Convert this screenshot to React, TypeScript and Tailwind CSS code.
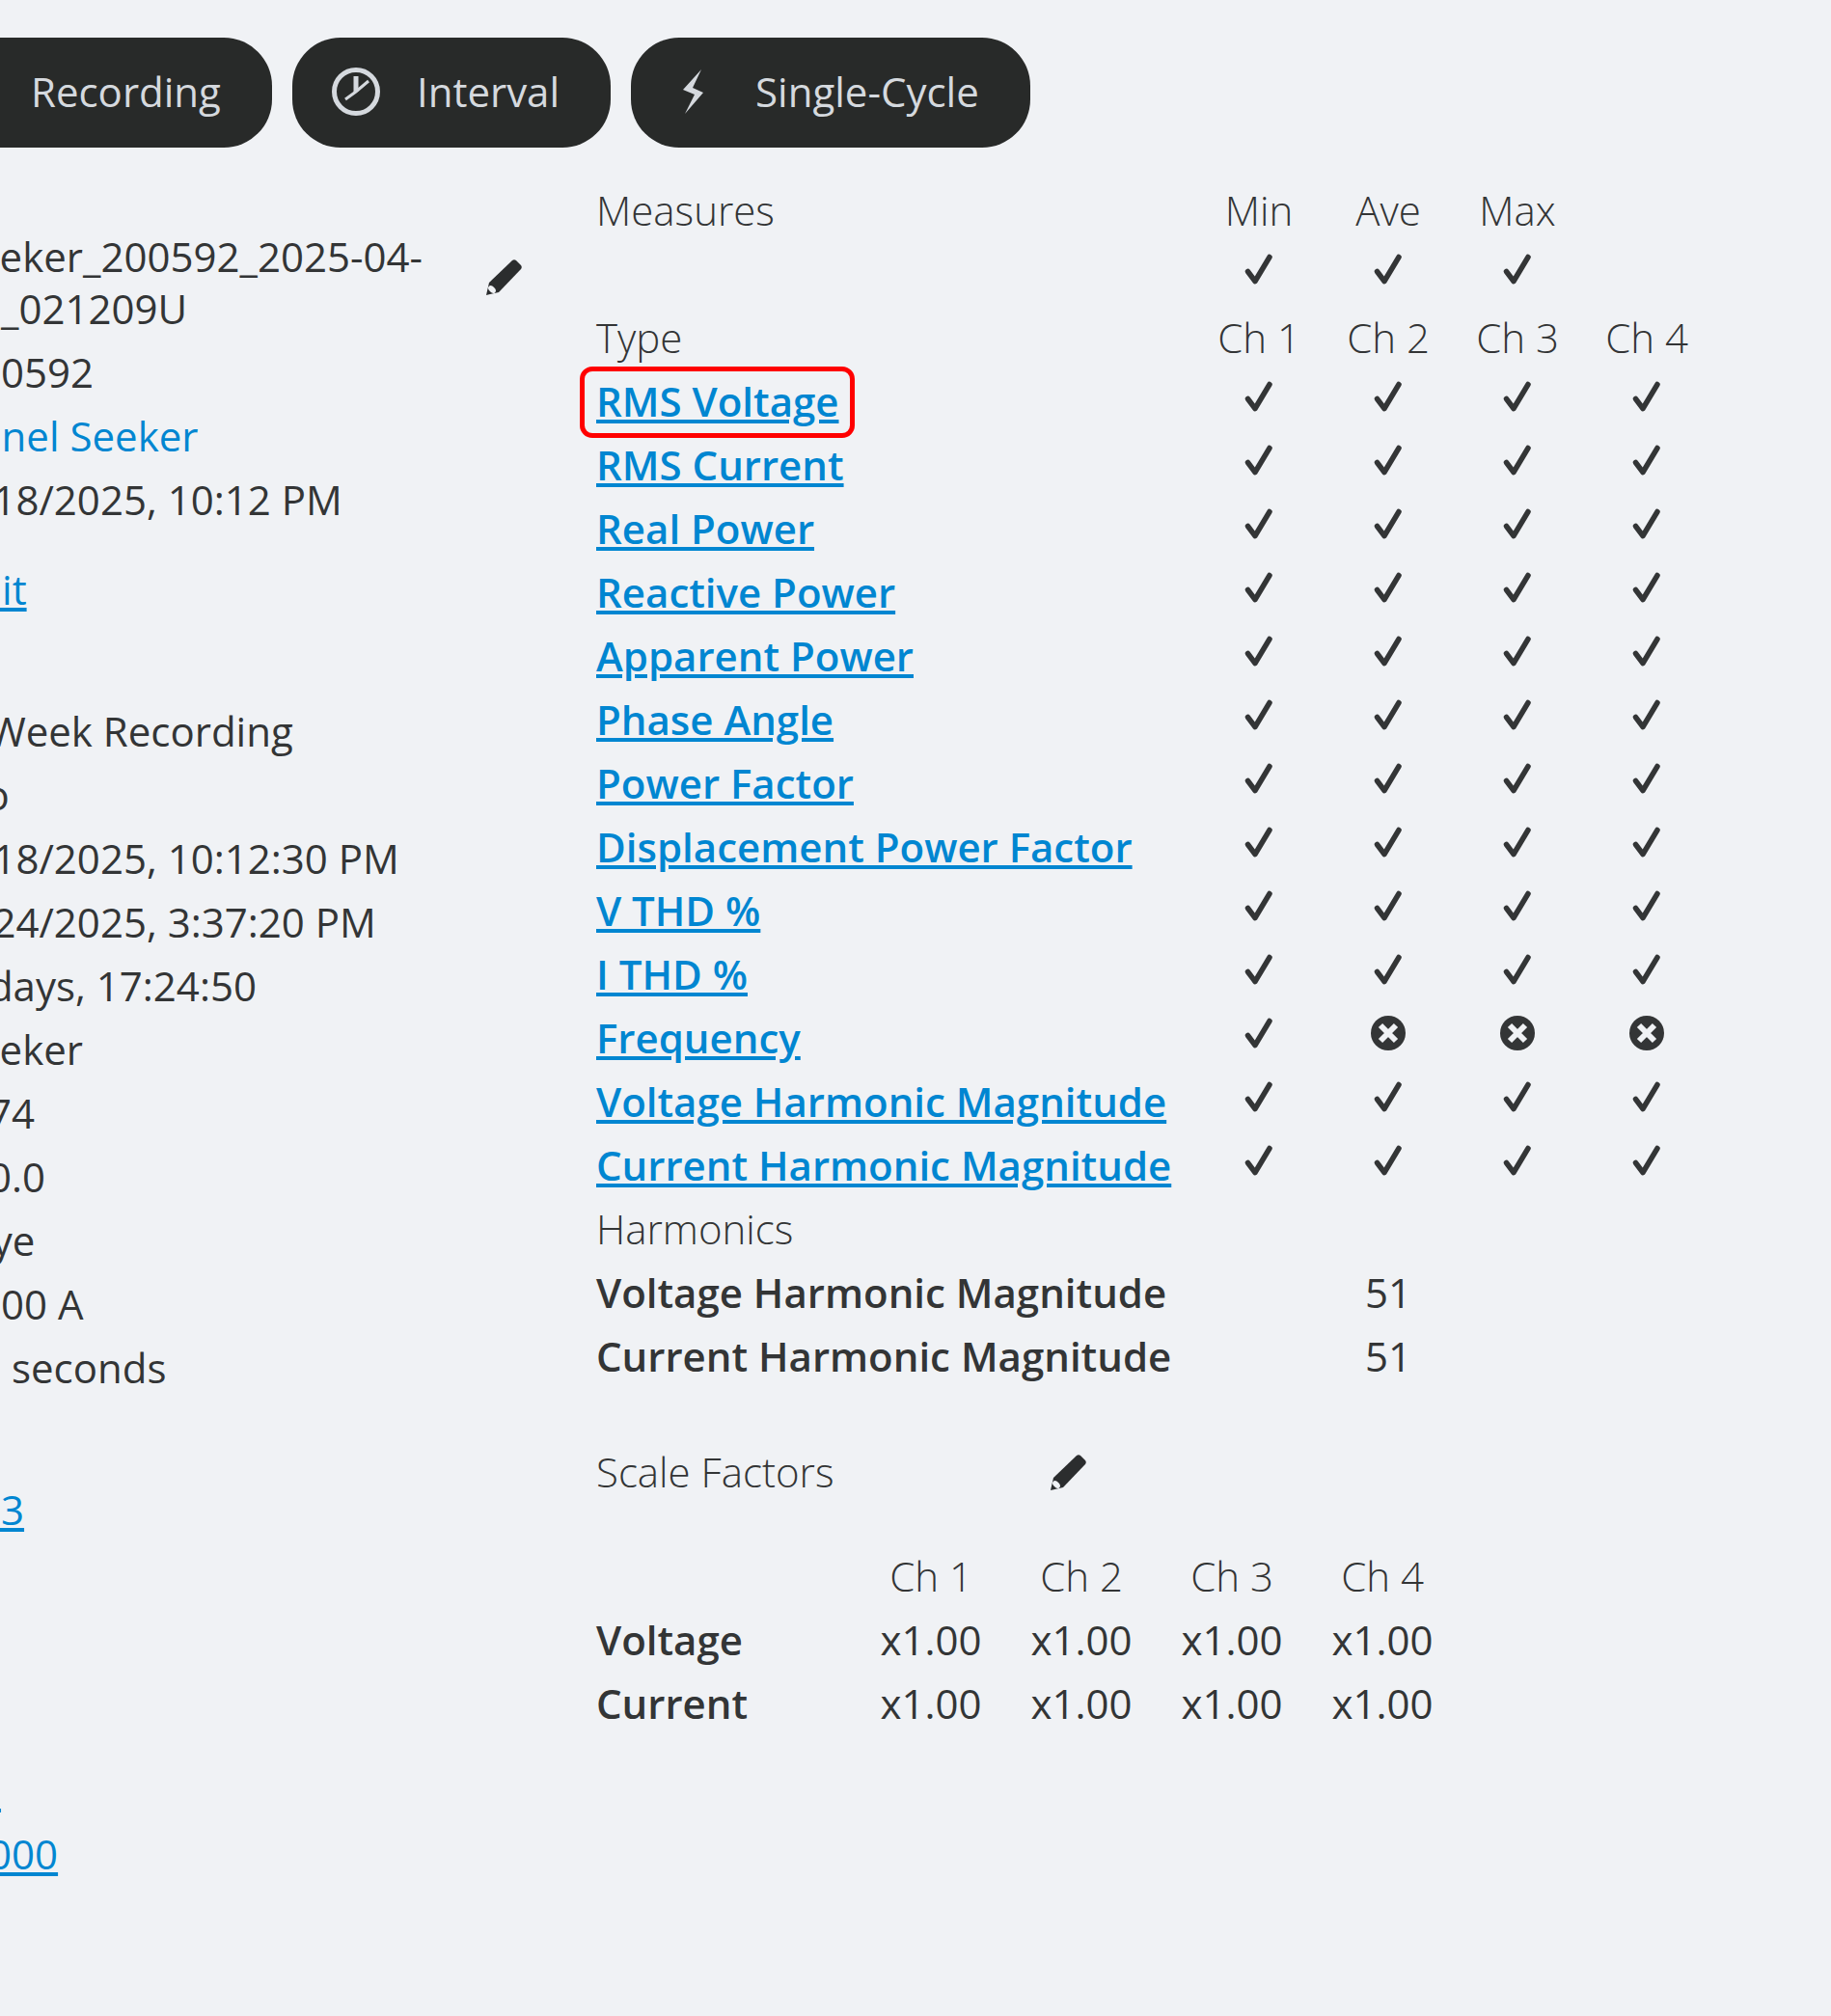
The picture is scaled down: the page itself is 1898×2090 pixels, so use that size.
const font = "font-['Open_Sans',sans-serif]";

function Check() {
  return (
    <svg width="30" height="32" viewBox="0 0 30 32" fill="none" stroke="#333536" strokeWidth="5.5" strokeLinecap="round" strokeLinejoin="round">
      <path d="M3.5 18.5 L11 28.5 L26 3.5" />
    </svg>
  );
}

function Cross() {
  return (
    <svg width="36" height="36" viewBox="0 0 36 36">
      <circle cx="18" cy="18" r="18" fill="#333536" />
      <path d="M10 10 L26 26 M26 10 L10 26" stroke="#f0f2f5" strokeWidth="6" />
    </svg>
  );
}

function Pencil() {
  return (
    <svg width="37" height="37" viewBox="0 0 37 37">
      <path d="M0 37 L3 24 L27 1 Q29 -0.5 31 1 L36 6 Q37.5 8 36 10 L13 34 Z" fill="#2b2d2e" />
      <ellipse cx="6" cy="31" rx="4.5" ry="3" transform="rotate(45 6 31)" fill="#f0f2f5" />
    </svg>
  );
}

function Clock() {
  return (
    <svg width="50" height="50" viewBox="0 0 50 50" fill="none" stroke="#d5d9de">
      <circle cx="25" cy="25" r="22.5" strokeWidth="5" />
      <path d="M25 9 V25" strokeWidth="5" />
      <path d="M14 33 L25 25 L38 14" strokeWidth="3" />
    </svg>
  );
}

function Bolt() {
  return (
    <svg width="50" height="50" viewBox="0 0 50 50">
      <path d="M32 2 L13 23 L25 28 L15 48 L34 26 L23 21 Z" fill="#d5d9de" />
    </svg>
  );
}

function Dot() {
  return <div className="w-[50px] h-[50px] rounded-full border-[5px] border-[#d5d9de]"></div>;
}

function Pill({ icon, label }: { icon: React.ReactNode; label: string }) {
  return (
    <div className="flex items-center h-[114px] pb-[3px] pl-[41px] pr-[53px] gap-[38px] rounded-[50px] bg-[#282a29] text-[#d5d9de] shrink-0">
      {icon}
      <span>{label}</span>
    </div>
  );
}

const types = [
  "RMS Voltage",
  "RMS Current",
  "Real Power",
  "Reactive Power",
  "Apparent Power",
  "Phase Angle",
  "Power Factor",
  "Displacement Power Factor",
  "V THD %",
  "I THD %",
  "Frequency",
  "Voltage Harmonic Magnitude",
  "Current Harmonic Magnitude",
];

const link = "text-[#0086d1] underline";

function InfoRow({ children, className = "" }: { children: React.ReactNode; className?: string }) {
  return <div className={"h-[66px] flex items-center whitespace-nowrap " + className}>{children}</div>;
}

function Cols({ children, className = "h-[66px]" }: { children: React.ReactNode; className?: string }) {
  return <div className={"grid grid-cols-[620px_134px_134px_134px_134px] items-center " + className}>{children}</div>;
}

function C({ children, className = "" }: { children?: React.ReactNode; className?: string }) {
  return <div className={"flex justify-center items-center " + className}>{children}</div>;
}

function ScaleRow({ label }: { label: string }) {
  return (
    <div className="grid grid-cols-[269px_156px_156px_156px_156px] items-center h-[66px]">
      <div className="font-semibold">{label}</div>
      <div className="text-center">x1.00</div>
      <div className="text-center">x1.00</div>
      <div className="text-center">x1.00</div>
      <div className="text-center">x1.00</div>
    </div>
  );
}

export default function App() {
  return (
    <div className={font + " w-full h-[2090px] overflow-hidden bg-[#f0f2f5] text-[#333536] text-[42px] leading-[53.3px] pt-[39px]"}>
      <div className="flex gap-[21px] ml-[-97px]">
        <Pill icon={<Dot />} label="Recording" />
        <Pill icon={<Clock />} label="Interval" />
        <Pill icon={<Bolt />} label="Single-Cycle" />
      </div>

      <div className="flex mt-[32px] ml-[-47px]">
        <div className="w-[665px] shrink-0 pt-[48px] relative">
          <div className="py-[6.4px] w-[590px] flex justify-between">
            <div>
              <div>Seeker_200592_2025-04-</div>
              <div>18_021209U</div>
            </div>
            <div className="mt-[30px] mr-[2px]">
              <Pencil />
            </div>
          </div>
          <InfoRow>200592</InfoRow>
          <InfoRow className="text-[#0086d1]">Panel Seeker</InfoRow>
          <InfoRow>4/18/2025, 10:12 PM</InfoRow>
          <InfoRow className="mt-[27px]"><span className={link}>Edit</span></InfoRow>
          <InfoRow className="mt-[81px]">1 Week Recording</InfoRow>
          <InfoRow>No</InfoRow>
          <InfoRow>4/18/2025, 10:12:30 PM</InfoRow>
          <InfoRow>4/24/2025, 3:37:20 PM</InfoRow>
          <InfoRow>6 days, 17:24:50</InfoRow>
          <InfoRow>Seeker</InfoRow>
          <InfoRow>1.74</InfoRow>
          <InfoRow>1.0.0</InfoRow>
          <InfoRow>Wye</InfoRow>
          <InfoRow>1000 A</InfoRow>
          <InfoRow>10 seconds</InfoRow>
          <InfoRow className="mt-[81px]"><span className={link}>123</span></InfoRow>
          <InfoRow className="mt-[225px]"><span className={link}>20</span></InfoRow>
          <InfoRow><span className={link}>1.000</span></InfoRow>
        </div>

        <div className="shrink-0">
          <Cols className="h-[66px] font-light">
            <div>Measures</div>
            <C>Min</C>
            <C>Ave</C>
            <C>Max</C>
          </Cols>
          <Cols className="h-[56px]">
            <div></div>
            <C><Check /></C>
            <C><Check /></C>
            <C><Check /></C>
          </Cols>
          <Cols className="h-[66px] font-light mt-[10px]">
            <div>Type</div>
            <C>Ch 1</C>
            <C>Ch 2</C>
            <C>Ch 3</C>
            <C>Ch 4</C>
          </Cols>
          {types.map((t, i) => (
            <Cols key={t}>
              <div className="relative">
                <span className={link + " font-semibold"}>{t}</span>
                {i === 0 && (
                  <div className="absolute left-[-17px] top-[-9px] w-[285px] h-[74px] border-[5px] border-[#ff0000] rounded-[13px]"></div>
                )}
              </div>
              <C className="pb-[10px]"><Check /></C>
              <C className="pb-[10px]">{t === "Frequency" ? <Cross /> : <Check />}</C>
              <C className="pb-[10px]">{t === "Frequency" ? <Cross /> : <Check />}</C>
              <C className="pb-[10px]">{t === "Frequency" ? <Cross /> : <Check />}</C>
            </Cols>
          ))}
          <Cols className="h-[66px] font-light">
            <div>Harmonics</div>
          </Cols>
          <Cols>
            <div className="font-semibold">Voltage Harmonic Magnitude</div>
            <div></div>
            <C>51</C>
          </Cols>
          <Cols>
            <div className="font-semibold">Current Harmonic Magnitude</div>
            <div></div>
            <C>51</C>
          </Cols>

          <div className="flex items-center h-[66px] mt-[54px] w-[508px] justify-between font-light">
            <span>Scale Factors</span>
            <Pencil />
          </div>
          <div className="mt-[42px]">
            <div className="grid grid-cols-[269px_156px_156px_156px_156px] items-center h-[66px] font-light">
              <div></div>
              <div className="text-center">Ch 1</div>
              <div className="text-center">Ch 2</div>
              <div className="text-center">Ch 3</div>
              <div className="text-center">Ch 4</div>
            </div>
            <ScaleRow label="Voltage" />
            <ScaleRow label="Current" />
          </div>
        </div>
      </div>
    </div>
  );
}
